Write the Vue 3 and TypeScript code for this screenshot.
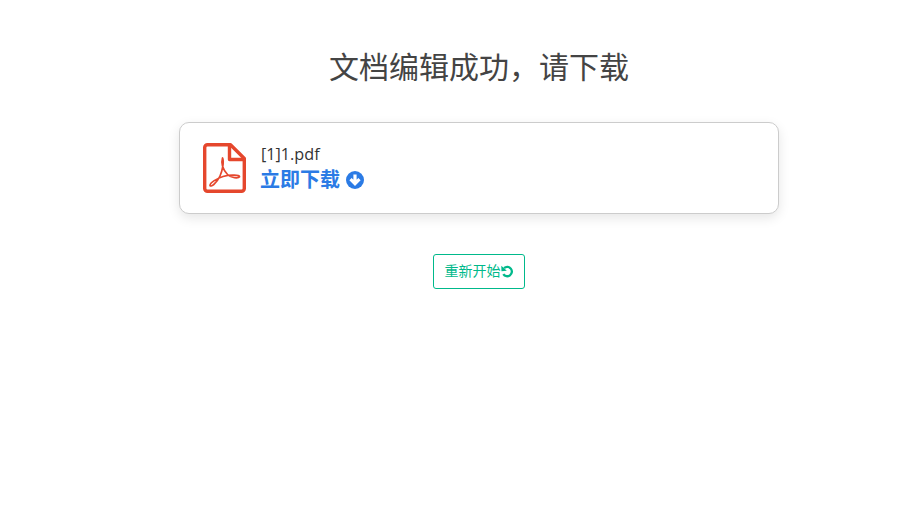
<script setup lang="ts">
const title = '文档编辑成功，请下载'
const fileName = '[1]1.pdf'
</script>

<template>
  <main class="page">
    <h1 class="title">{{ title }}</h1>
    <section class="card">
      <svg class="pdf" viewBox="0 0 43 50" fill="none" stroke="#e5472d">
        <path d="M4.500 1.700H27.500L41.300 15.500V45.500a2.800 2.800 0 0 1-2.800 2.800H4.500a2.800 2.800 0 0 1-2.800-2.800V4.500a2.800 2.800 0 0 1 2.800-2.800Z" stroke-width="3.400" stroke-linejoin="round" />
        <path d="M26.500 2.500V16.500H40.500" stroke-width="3.400" stroke-linejoin="round" />
        <path d="M19.500 15c-1.500 5 .5 11.500 5 16.500 3.500 3.800 11 4 12 2.300.6-1.800-9-2.500-16.500-.3C14 35.500 7 39.500 7 42.300c.3 2.400 6.500-1.500 10-9.300C19.300 28 21.300 18.500 19.500 15Z" stroke-width="1.700" stroke-linejoin="round" />
      </svg>
      <div class="info">
        <div class="name">{{ fileName }}</div>
        <a class="download">
          <span>立即下载</span>
          <svg class="down" viewBox="0 0 18 18">
            <circle cx="9" cy="9" r="9" fill="#2b7be5" />
            <path d="M9 3.500v8.500M4.500 8.200 9 12.700l4.500-4.500" fill="none" stroke="#fff" stroke-width="3.200" />
          </svg>
        </a>
      </div>
    </section>
    <button class="restart" type="button">
      <span>重新开始</span>
      <svg class="redo" viewBox="0 0 14 14" fill="none">
        <path d="M3.300 3.400A5 5 0 1 1 2.500 9.800" stroke="#00b98b" stroke-width="2.500" />
        <path d="M.3 .8 .5 6.800 6.300 6.200Z" fill="#00b98b" />
      </svg>
    </button>
  </main>
</template>

<style>
html, body { background: #fff; }
</style>

<style scoped>
.page {
  width: 600px;
  margin-left: 179px;
  min-height: 522px;
  display: flex;
  flex-direction: column;
  align-items: center;
  font-family: "Open Sans", "Noto Sans CJK SC", sans-serif;
  color: #333;
}
.title {
  margin: 45px 0 33px;
  font-size: 30px;
  line-height: 44px;
  font-weight: 400;
  color: #444;
}
.card {
  box-sizing: border-box;
  width: 100%;
  height: 92px;
  padding: 0 23px;
  display: flex;
  align-items: center;
  gap: 14px;
  background: #fff;
  border: 1px solid #ccc;
  border-radius: 10px;
  box-shadow: 0 4px 12px rgba(0, 0, 0, 0.1);
}
.pdf { width: 43px; height: 50px; flex: none; }
.info { display: flex; flex-direction: column; margin-left: 1px; }
.name { font-size: 16.2px; line-height: 24px; color: #333; margin-top: -2px; margin-bottom: 1px; }
.download {
  display: flex;
  align-items: center;
  gap: 6px;
  margin-left: -1px;
  font-size: 20px;
  line-height: 26px;
  font-weight: 700;
  color: #2b7be5;
}
.down { width: 18px; height: 18px; }
.restart {
  box-sizing: border-box;
  width: 92px;
  height: 35px;
  margin-top: 40px;
  padding: 0 0 3px;
  display: flex;
  align-items: center;
  justify-content: center;
  background: #fff;
  border: 1px solid #00b98b;
  border-radius: 3px;
  color: #00b98b;
  font-family: inherit;
  font-size: 14px;
}
.redo { width: 13px; height: 13px; margin-top: 3px; }
</style>
